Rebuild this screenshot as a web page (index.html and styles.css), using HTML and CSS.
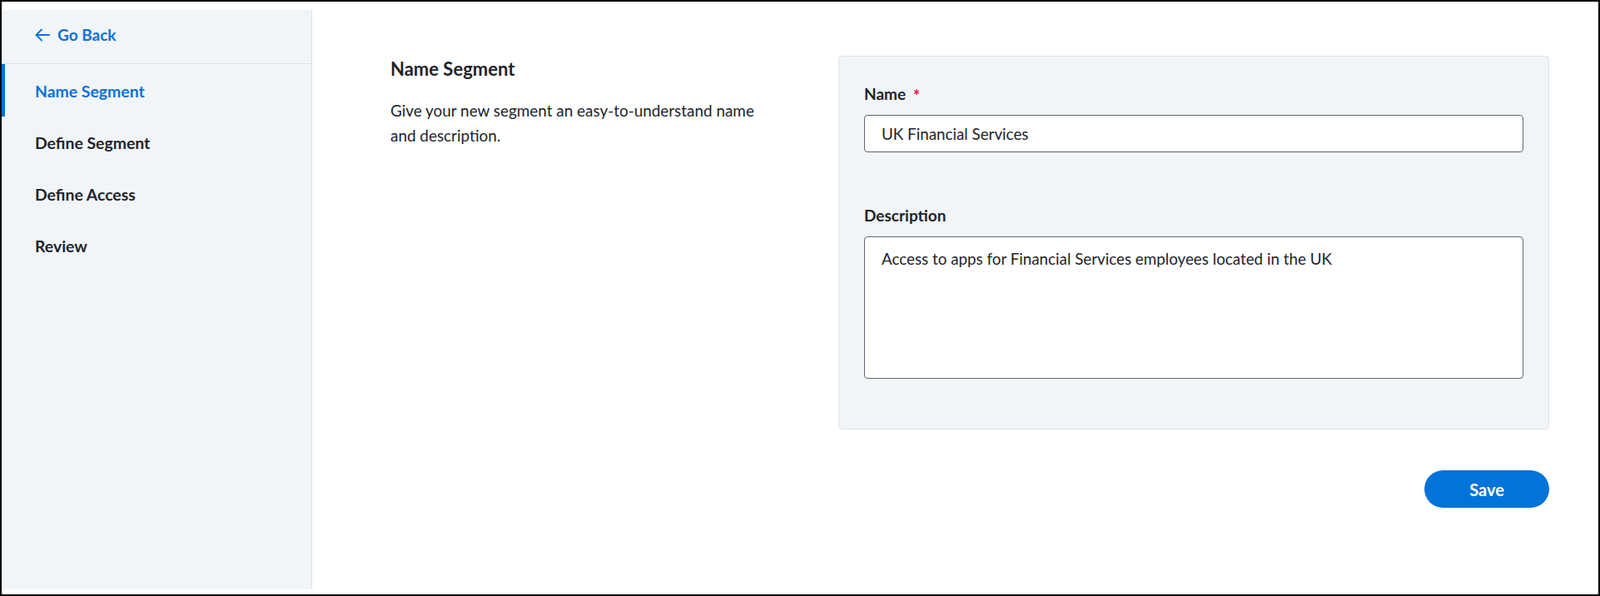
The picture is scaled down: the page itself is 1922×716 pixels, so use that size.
FILE: index.html
```html
<!DOCTYPE html>
<html lang="en">
<head>
    <meta charset="UTF-8">
    <meta name="viewport" content="width=device-width, initial-scale=1.0">
    <title>Name Segment</title>
    <link rel="stylesheet" href="styles.css">
</head>
<body>
    <div class="frame">
        <!-- side nav -->
        <aside class="sidebar">
            <a class="go-back" href="#">
                <svg width="18" height="16" viewBox="0 0 18 16" fill="none" stroke="currentColor" stroke-width="1.8" stroke-linecap="round" stroke-linejoin="round">
                    <path d="M17 8H1.5"/>
                    <path d="M8 1.5L1.5 8L8 14.5"/>
                </svg>
                Go Back
            </a>
            <nav class="steps">
                <a class="step active" href="#">Name Segment</a>
                <a class="step" href="#">Define Segment</a>
                <a class="step" href="#">Define Access</a>
                <a class="step" href="#">Review</a>
            </nav>
        </aside>

        <main class="main">
            <div class="section">
                <div class="intro">
                    <h2>Name Segment</h2>
                    <p>Give your new segment an easy-to-understand name and description.</p>
                </div>
                <div class="card">
                    <div class="field">
                        <label for="name">Name <span class="req">*</span></label>
                        <input id="name" type="text" value="UK Financial Services">
                    </div>
                    <div class="field">
                        <label for="desc">Description</label>
                        <textarea id="desc">Access to apps for Financial Services employees located in the UK</textarea>
                    </div>
                </div>
            </div>
            <div class="actions">
                <button class="save-btn">Save</button>
            </div>
        </main>
    </div>
</body>
</html>
```

FILE: styles.css
```css
* {
    box-sizing: border-box;
}

body {
    font-family: Lato, "Liberation Sans", sans-serif;
    margin: 0;
    padding: 0;
    color: #1e242b;
    background: #fff;
}

.frame {
    display: flex;
    height: 716px;
    border: 2px solid #000;
}

.sidebar {
    width: 373px;
    height: 696px;
    margin-top: 10px;
    background-color: #f2f5f8;
    border-right: 1px solid #dde1e6;
}

.go-back {
    display: flex;
    align-items: center;
    gap: 9px;
    height: 65px;
    padding: 0 0 5px 40px;
    border-bottom: 1px solid #dde2e8;
    color: #0b71d9;
    font-size: 19px;
    font-weight: 700;
    text-decoration: none;
}

.steps {
    display: flex;
    flex-direction: column;
    padding-top: 1px;
}

.step {
    display: flex;
    align-items: center;
    height: 62px;
    padding-left: 40px;
    color: #1e242b;
    font-size: 19.4px;
    font-weight: 700;
    text-decoration: none;
}

.step.active {
    color: #0b71d9;
    border-left: 4px solid #0b71d9;
    padding-left: 36px;
    margin-top: -1px;
    height: 63px;
    padding-top: 1px;
}

.main {
    flex: 1;
    padding: 65px 59px 0 94px;
}

.section {
    display: flex;
    gap: 84px;
}

.intro {
    width: 454px;
    padding-top: 2px;
}

.intro h2 {
    margin: 0;
    font-size: 22px;
    line-height: 28px;
    font-weight: 700;
}

.intro p {
    margin: 21px 0 0;
    font-size: 18.9px;
    line-height: 30px;
}

.card {
    flex: 1;
    padding: 33px 30px 60px 30px;
    background-color: #f2f5f8;
    border: 1px solid #e0e4e9;
    border-radius: 4px;
}

.field + .field {
    margin-top: 64px;
}

.field label {
    display: block;
    height: 24px;
    margin-bottom: 13px;
    font-size: 19px;
    line-height: 24px;
    font-weight: 700;
}

.req {
    color: #e0134f;
    font-size: 20px;
    line-height: 1;
    margin-left: 4px;
    vertical-align: -3px;
}

.field input,
.field textarea {
    display: block;
    width: 100%;
    font-family: inherit;
    font-size: 18.8px;
    color: #1e242b;
    background: #fff;
    border: 1px solid #5d6876;
    border-radius: 4px;
    padding: 0 20px;
    outline: none;
}

.field input {
    height: 45px;
}

.field textarea {
    height: 171px;
    padding-top: 14px;
    line-height: 24px;
    resize: none;
}

.actions {
    display: flex;
    justify-content: flex-end;
    margin-top: 49px;
}

.save-btn {
    width: 150px;
    height: 45px;
    border: none;
    border-radius: 23px;
    background-color: #0273d9;
    color: #fff;
    font-family: inherit;
    font-size: 20px;
    font-weight: 700;
    cursor: pointer;
}
```
